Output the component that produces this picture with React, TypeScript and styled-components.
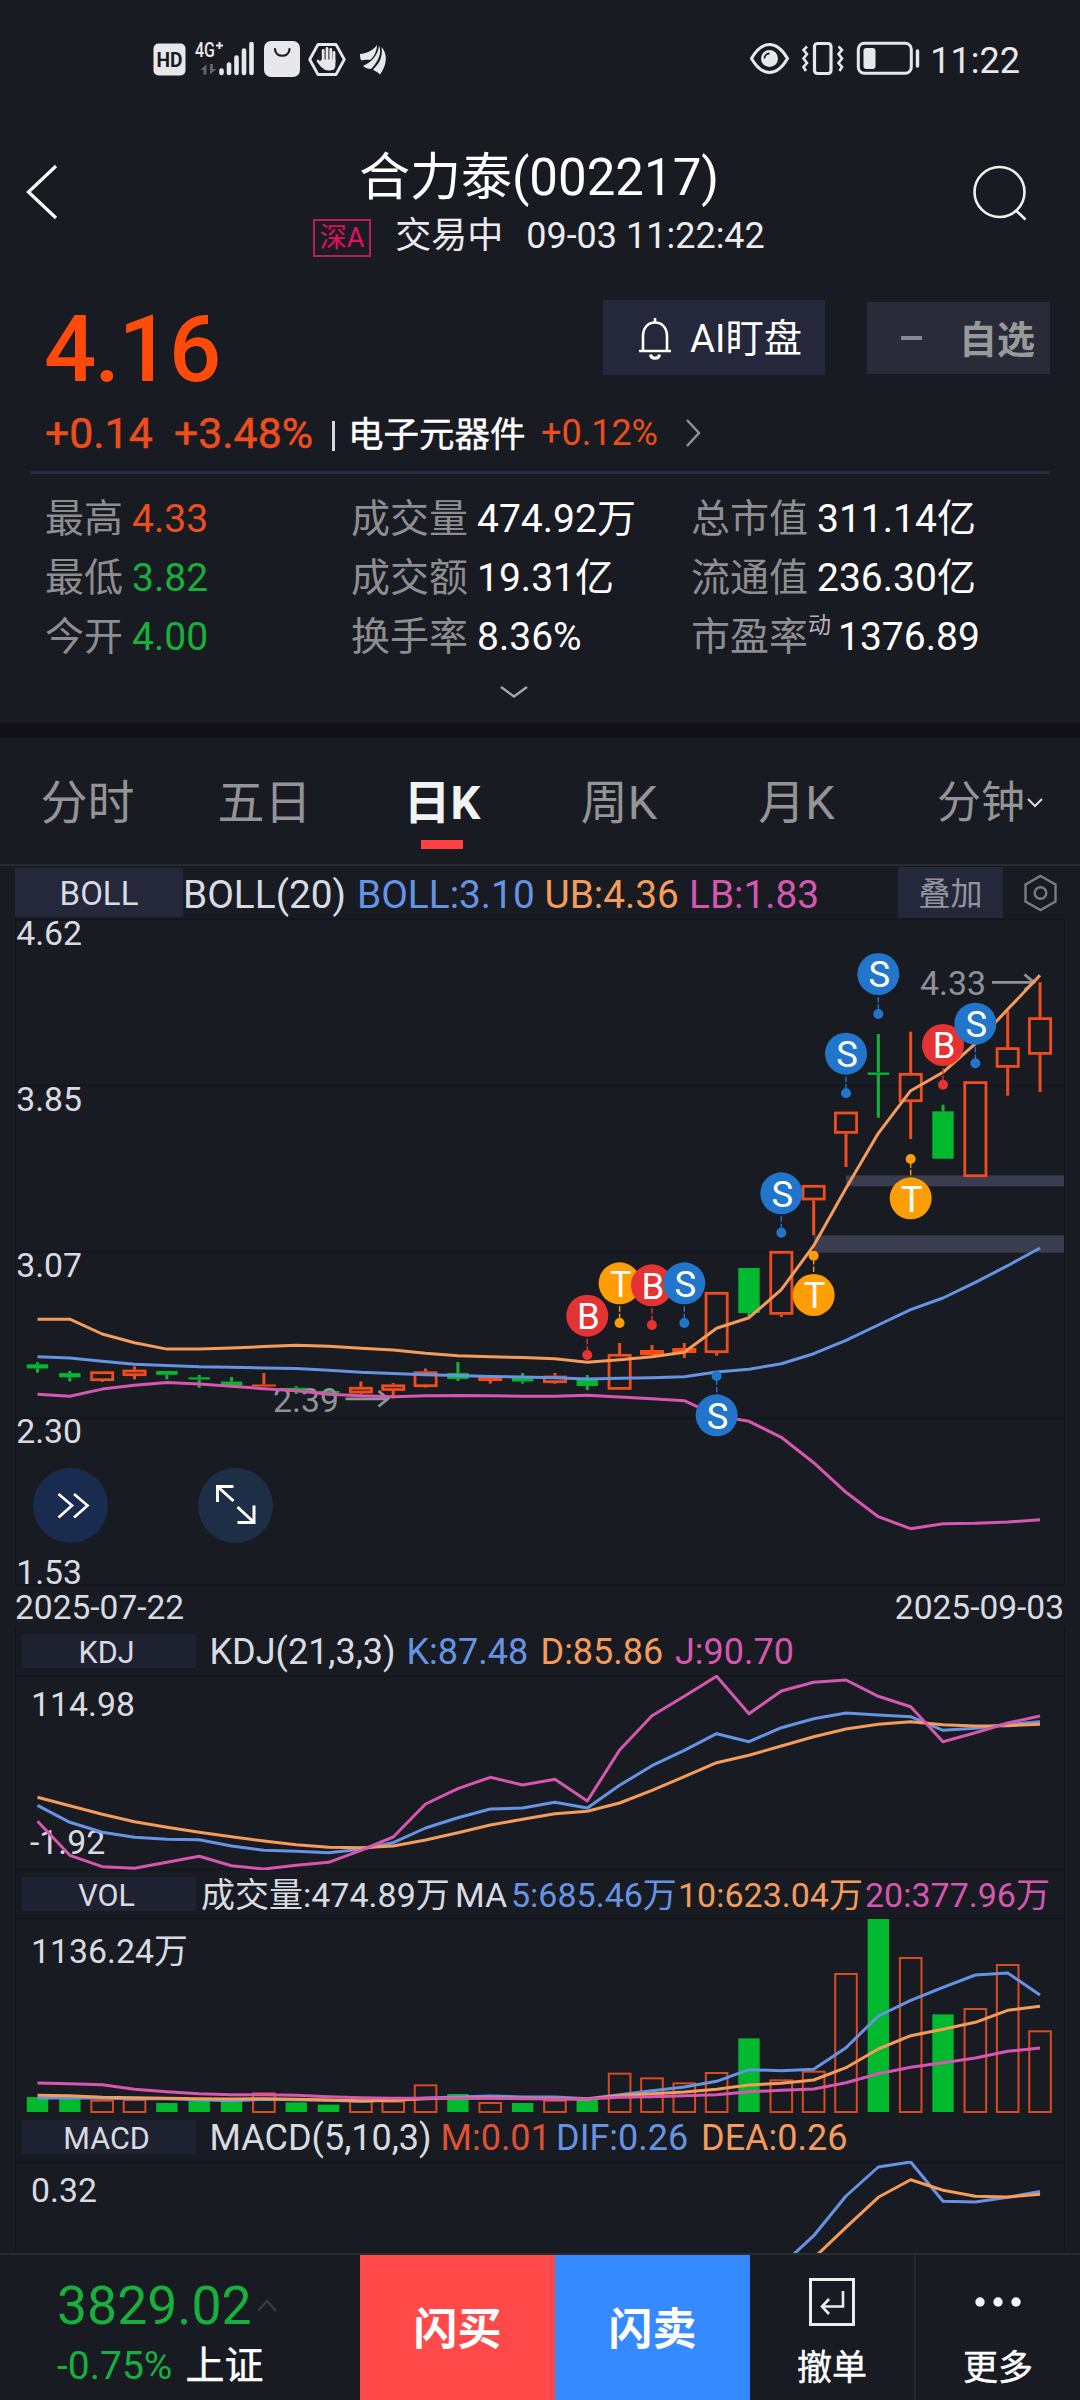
import React from 'react';
import styled, { createGlobalStyle } from 'styled-components';

const C = {
  bg: '#191b23',
  up: '#ff4a0a',
  upSoft: '#ee4d1c',
  down: '#17b03c',
  fill: '#00b92e',
  orange: '#f59c5a',
  blue: '#6694e4',
  pink: '#d557b0',
  text: '#d9dbe3',
  muted: '#8e8e91',
  line: '#13151c',
  chip: '#25283a',
};

const Global = createGlobalStyle`
  * { box-sizing: border-box; }
  body { margin: 0; background: ${C.bg}; }
  body, text { font-family: Roboto, "Noto Sans CJK SC", sans-serif; }
`;

const Screen = styled.div`
  width: 1080px;
  height: 2400px;
  background: ${C.bg};
  color: #fff;
  overflow: hidden;
  display: flex;
  flex-direction: column;
  white-space: pre;
`;

const Drawing = styled.svg<{ $open?: boolean }>`
  display: block;
  flex: none;
  overflow: ${p => (p.$open ? 'visible' : 'hidden')};
`;

/* ---------- status bar ---------- */

const StatusBar = styled.div`
  height: 116px;
  display: flex;
  align-items: center;
  justify-content: space-between;
  padding: 2px 60px 0 150px;
`;

const StatusGroup = styled.div`
  display: flex;
  align-items: center;
  height: 40px;
`;

const Clock = styled.span`
  color: #e8e8ea;
  font-size: 36px;
  line-height: 40px;
  margin: 4px 0 0 8px;
`;

/* ---------- header ---------- */

const Header = styled.header`
  height: 152px;
  display: flex;
  align-items: center;
  justify-content: space-between;
  padding: 0 50px 0 22px;
`;

const TitleStack = styled.div`
  align-self: flex-start;
  margin: 33px 0 0 42px;
  display: flex;
  flex-direction: column;
  align-items: center;
`;

const Title = styled.h1`
  margin: 0;
  font-size: 51px;
  font-weight: 400;
  line-height: 58px;
`;

const SubTitle = styled.div`
  display: flex;
  align-items: center;
  height: 58px;
  font-size: 36px;
  line-height: 58px;
  color: #ececee;
`;

const MarketBadge = styled.span`
  width: 58px;
  height: 38px;
  margin: 3px 24px 0 0;
  border: 2px solid #b52058;
  color: #e30f60;
  font-size: 27px;
  line-height: 35px;
  text-align: center;
`;

const SessionLabel = styled.span`
  margin-right: 23px;
`;

/* ---------- quote ---------- */

const Quote = styled.section`
  height: 455px;
  padding: 32px 30px 0;
`;

const PriceRow = styled.div`
  display: flex;
  align-items: flex-start;
  height: 99px;
  padding-left: 14px;
`;

const Price = styled.div`
  flex: 1;
  font-size: 92px;
  font-weight: 500;
  letter-spacing: -1.7px;
  line-height: 99px;
  color: ${C.up};
`;

const WatchButton = styled.div`
  width: 222px;
  height: 75px;
  display: flex;
  align-items: center;
  padding: 2px 0 0 34px;
  background: #25283b;
  font-size: 38.3px;
  line-height: 73px;
  gap: 17px;
`;

const FavButton = styled.div`
  width: 183px;
  height: 72px;
  margin: 2px 0 0 42px;
  padding: 0 15px 3px 34px;
  display: flex;
  align-items: center;
  justify-content: space-between;
  background: #292b38;
  color: #999;
  font-size: 38px;
  font-weight: 700;
`;

const Minus = styled.span`
  width: 21px;
  height: 4px;
  margin-top: 3px;
  background: #82879b;
`;

const ChangeRow = styled.div`
  display: flex;
  align-items: center;
  height: 68px;
  padding-left: 15px;
  line-height: 70px;
`;

const Change = styled.span<{ $size: number; $w?: number; $bold?: boolean }>`
  color: ${C.upSoft};
  font-size: ${p => p.$size}px;
  width: ${p => (p.$w ? p.$w + 'px' : 'auto')};
  -webkit-text-stroke: ${p => (p.$bold ? 0.5 : 0)}px ${C.upSoft};
`;

const Bar = styled.span`
  width: 3px;
  height: 30px;
  margin: 5px 13px 0 0;
  background: #d8d8da;
`;

const Sector = styled.span`
  width: 193px;
  margin-top: 3px;
  font-size: 35.5px;
  -webkit-text-stroke: 0.4px #fff;
`;

const Rule = styled.div`
  height: 3px;
  margin-top: 4px;
  background: #2a2c3a;
`;

const Stats = styled.div`
  display: grid;
  grid-template-columns: 306px 340px 1fr;
  grid-auto-rows: 59px;
  padding: 16px 0 0 15px;
`;

const Stat = styled.div`
  display: flex;
  font-size: 39px;
  line-height: 59px;
`;

const StatLabel = styled.span`
  color: ${C.muted};
`;

const StatNote = styled.span`
  width: 21px;
  color: #b4b4b8;
  font-size: 23px;
  line-height: 35px;
`;

const StatValue = styled.span<{ $color?: string }>`
  margin-left: 9px;
  color: ${p => p.$color || '#fff'};
`;

const Expand = styled.div`
  display: flex;
  justify-content: center;
  padding: 17px 52px 0 0;
`;

const Band = styled.div`
  height: 15px;
  background: #111016;
`;

/* ---------- tabs ---------- */

const Tabs = styled.nav`
  display: grid;
  grid-template-columns: 175px 179px 176px 178px 177px 1fr;
  height: 128px;
  border-bottom: 2px solid #2b2b2d;
`;

const Tab = styled.div<{ $active?: boolean; $shift?: number }>`
  display: flex;
  flex-direction: column;
  align-items: center;
  gap: 6px;
  padding: 34px 0 0 ${p => p.$shift || 0}px;
  font-size: 47px;
  line-height: 62px;
  font-weight: ${p => (p.$active ? 700 : 400)};
  color: ${p => (p.$active ? '#f2f2f3' : '#949496')};
`;

const TabLine = styled.span`
  display: flex;
  align-items: center;
  gap: 2px;
  font-size: 44px;
`;

const TabBar = styled.span`
  width: 42px;
  height: 9px;
  background: #ff4040;
`;

/* ---------- indicator panels ---------- */

const BollHead = styled.div`
  height: 53px;
  display: flex;
  align-items: center;
  padding: 0 22px 0 15px;
`;

const BollChip = styled.span`
  width: 168px;
  height: 49px;
  background: ${C.chip};
  color: ${C.text};
  font-size: 33px;
  line-height: 51px;
  text-align: center;
`;

const Info = styled.div<{ $cols: string; $size: number; $left: number }>`
  display: grid;
  grid-template-columns: ${p => p.$cols};
  margin-left: ${p => p.$left}px;
  padding-top: 3px;
  font-size: ${p => p.$size}px;
  line-height: 47px;
`;

const InfoItem = styled.span<{ $color?: string }>`
  color: ${p => p.$color || C.text};
`;

const Overlay = styled.span`
  width: 105px;
  height: 51px;
  margin-right: 20px;
  background: ${C.chip};
  color: #93959f;
  font-size: 32px;
  line-height: 54px;
  text-align: center;
`;

const Spring = styled.span`
  flex: 1;
`;

const Panel = styled.section`
  position: relative;
  width: 1050px;
  margin: 0 15px;
  border: solid ${C.line};
  border-width: 0 1px;
`;

const PanelHead = styled.div`
  height: 48px;
  display: flex;
  align-items: center;
  padding-left: 6px;
`;

const Chip = styled.span`
  width: 174px;
  height: 34px;
  padding-right: 5px;
  background: #1f2231;
  color: ${C.text};
  font-size: 30.5px;
  line-height: 37px;
  text-align: center;
`;

const RoundButton = styled.div<{ $left: number; $bg: string }>`
  position: absolute;
  left: ${p => p.$left}px;
  top: 549px;
  width: 75px;
  height: 75px;
  border-radius: 50%;
  background: ${p => p.$bg};
`;

const Dates = styled.div`
  height: 41px;
  display: flex;
  justify-content: space-between;
  padding: 0 16px 0 15px;
  font-size: 33.5px;
  line-height: 43px;
  color: ${C.text};
`;

/* ---------- bottom bar ---------- */

const Footer = styled.footer`
  height: 147px;
  display: flex;
  border-top: 2px solid #2b2c30;
`;

const IndexBox = styled.div`
  width: 360px;
  padding: 20px 0 0 57px;
`;

const IndexValue = styled.div`
  display: flex;
  align-items: center;
  gap: 5px;
  font-size: 53.5px;
  line-height: 61px;
  color: ${C.down};
`;

const IndexChange = styled.div`
  display: flex;
  gap: 13px;
  font-size: 39px;
  line-height: 60px;
  color: ${C.down};
`;

const IndexName = styled.span`
  color: #fff;
  -webkit-text-stroke: 0.4px #fff;
`;

const Trade = styled.div<{ $bg: string }>`
  width: 195px;
  background: ${p => p.$bg};
  font-size: 44px;
  font-weight: 700;
  line-height: 150px;
  text-align: center;
`;

const Action = styled.div<{ $divided?: boolean }>`
  flex: 1;
  display: flex;
  flex-direction: column;
  align-items: center;
  padding-top: 23px;
  border-left: ${p => (p.$divided ? '2px solid #26272d' : 'none')};
  font-size: 35px;
  line-height: 40px;
  -webkit-text-stroke: 0.4px #fff;
  gap: 23px;
`;

/* ---------- chart data (plot coordinates) ---------- */

const px = (i: number) => 37.5 + i * 32.34;

const UB = [1319.2, 1319.2, 1334, 1342.8, 1349.1, 1349.1, 1347.9, 1346.6, 1345.3, 1346.2, 1348.3, 1350, 1353.3, 1355.8, 1356.7, 1357.5, 1358.7, 1362.3, 1359.7, 1356.7, 1352.3, 1328.3, 1317.7, 1289.7, 1245.7, 1188.3, 1133.3, 1090.7, 1072.3, 1043.7, 1009.3, 975.3];
const MID = [1356.7, 1358, 1361.3, 1364.3, 1365.5, 1366.8, 1367.2, 1368, 1368.5, 1370.2, 1372.3, 1373.5, 1374.8, 1375.6, 1376.5, 1377, 1377.7, 1379, 1378.3, 1377.7, 1376.7, 1372, 1369.3, 1363.7, 1353.7, 1340.3, 1325, 1309.7, 1298, 1282.3, 1265.7, 1248];
const LB = [1394.2, 1396.3, 1389.1, 1385.3, 1382.4, 1384, 1386.2, 1388.7, 1390.8, 1394.2, 1395.8, 1396.7, 1395.8, 1395.4, 1395.8, 1396.3, 1396.3, 1395.3, 1397, 1398.7, 1400.7, 1415.7, 1421.3, 1437.3, 1462.7, 1492.3, 1516.7, 1528.7, 1523.7, 1523.3, 1522, 1519.7];

// [rising, body top, body bottom, wick top, wick bottom]
type Candle = [number, number, number, number, number];
const CANDLES: Candle[] = [
  [0, 1364.3, 1368.5, 1362.2, 1372.7], [0, 1373.1, 1377.3, 1371, 1381.5], [1, 1371.4, 1381, 1371.4, 1382],
  [1, 1369.7, 1376, 1366.4, 1379.4], [0, 1371, 1374.8, 1371, 1379.4], [0, 1377.3, 1379.5, 1374.8, 1387.8],
  [0, 1381.5, 1385.7, 1377, 1385.7], [1, 1384.5, 1386.5, 1373, 1386.5], [0, 1387.8, 1390, 1386, 1394],
  [0, 1391, 1393.3, 1391, 1395], [1, 1387, 1393.3, 1381.5, 1394.5], [1, 1384.5, 1390.8, 1383, 1398.3],
  [1, 1371.4, 1387, 1368.5, 1387.6], [0, 1373, 1379, 1362, 1381], [1, 1377, 1381, 1377, 1383.6],
  [0, 1377.3, 1381.5, 1373, 1383.6], [1, 1375.7, 1383, 1373, 1383.7], [0, 1379.7, 1386, 1375, 1390],
  [1, 1354, 1389.7, 1343, 1389.7], [1, 1350, 1355, 1345, 1355], [1, 1348, 1353, 1343, 1358],
  [1, 1292, 1353, 1292, 1355.7], [0, 1268, 1313, 1268, 1316], [1, 1251, 1314.7, 1251, 1317],
  [1, 1185, 1200.3, 1185, 1235.3], [1, 1111.7, 1133.7, 1111.7, 1167], [0, 1072.5, 1074.9, 1034, 1117.7],
  [1, 1073, 1102, 1031.7, 1139], [0, 1111.3, 1158.7, 1104.7, 1158.7], [1, 1081.3, 1177, 1081.3, 1177],
  [1, 1047.3, 1067.7, 1010.7, 1095.7], [1, 1017.3, 1054.7, 982.3, 1092],
];

// [index, letter, circle y, dot y]
const MARKS: [number, 'S' | 'B' | 'T', number, number][] = [
  [17, 'B', 1315.7, 1355], [18, 'T', 1283.3, 1323], [19, 'B', 1285.3, 1325], [20, 'S', 1283.3, 1323],
  [21, 'S', 1415.3, 1376], [23, 'S', 1193.3, 1232.7], [24, 'T', 1295, 1255.7], [25, 'S', 1053.7, 1093.3],
  [26, 'S', 974, 1014], [27, 'T', 1198.3, 1159], [28, 'B', 1045, 1084.7], [29, 'S', 1023.7, 1063.3],
];
const MARK_COLOR = { S: '#2176cc', B: '#e53232', T: '#ff9d05' };

const third = (base: number, v: number[]) => v.map(n => base + n / 3);

const KD_D = third(1580, [652, 677, 703, 725, 742, 757, 770, 783, 794, 802, 803, 798, 780, 758, 735, 718, 701, 694, 669, 631, 590, 548, 526, 498, 470, 447, 433, 425, 434, 438, 437, 433]);
const KD_K = third(1580, [676, 727, 757, 772, 778, 779, 798, 811, 814, 818, 808, 788, 744, 713, 687, 684, 667, 684, 616, 557, 511, 461, 485, 443, 416, 399, 405, 410, 451, 445, 433, 425]);
const KD_J = third(1580, [724, 826, 860, 865, 847, 829, 857, 867, 856, 847, 811, 771, 672, 626, 592, 615, 598, 663, 510, 407, 349, 289, 401, 333, 307, 300, 349, 380, 485, 458, 429, 408]);

const VOL_TOP = third(1870, [681, 682, 689, 687, 699, 693, 693, 667, 697, 704, 692, 692, 643, 672, 696, 699, 689, 690, 608, 622, 637, 606, 505, 628, 602, 309, 147, 261, 433, 414, 282, 481]);
const MA5 = third(1870, [684, 683, 685, 686, 686, 689, 692, 688, 689, 691, 694, 691, 684, 681, 678, 681, 681, 686, 674, 662, 651, 634, 599, 602, 598, 533, 438, 391, 352, 315, 309, 375]);
const MA10 = third(1870, [676, 677, 682, 683, 685, 686, 687, 686, 688, 690, 692, 691, 686, 684, 684, 685, 686, 687, 677, 671, 666, 658, 645, 640, 630, 593, 537, 497, 478, 457, 421, 409]);
const MA20 = third(1870, [639, 641, 644, 658, 665, 671, 674, 674, 676, 680, 683, 685, 685, 685, 685, 686, 687, 687, 682, 680, 677, 674, 665, 661, 657, 638, 611, 592, 578, 564, 544, 534]);

const DIF = [2265.7, 2235.7, 2196, 2167, 2162, 2201.3, 2202, 2197.3, 2191.5];
const DEA = [2290, 2258.2, 2227.3, 2197.3, 2179.7, 2190.3, 2196.3, 2197, 2194.3];

const Series = ({ ys, color, from = 0 }: { ys: number[]; color: string; from?: number }) => (
  <polyline
    points={ys.map((y, i) => `${px(i + from).toFixed(1)},${y.toFixed(1)}`).join(' ')}
    fill="none" stroke={color} strokeWidth={3} strokeLinejoin="round"
  />
);

const Label = ({ x, y, children, color = C.text }: { x: number; y: number; children: string; color?: string }) => (
  <text x={x} y={y} fontSize={33.8} fill={color}>{children}</text>
);

const CandleShape = ({ i }: { i: number }) => {
  const [rise, top, bot, hi, lo] = CANDLES[i];
  const x = px(i);
  const color = rise ? C.upSoft : C.down;
  const hollow = rise && bot - top > 5.5;
  return (
    <g stroke={color} strokeWidth={3} fill="none">
      {hi < top && <line x1={x} x2={x} y1={hi} y2={top} />}
      {lo > bot && <line x1={x} x2={x} y1={bot} y2={lo} />}
      {hollow
        ? <rect x={x - 10.6} y={top + 1.3} width={21.2} height={bot - top - 2.6} strokeWidth={2.8} />
        : <rect x={x - (rise ? 12 : 10.7)} y={top} width={rise ? 24 : 21.4} height={bot - top}
            fill={rise ? C.up : C.fill} stroke="none" />}
    </g>
  );
};

const Mark = ({ m }: { m: (typeof MARKS)[number] }) => {
  const [i, letter, cy, dot] = m;
  const x = px(i);
  const c = MARK_COLOR[letter];
  const dir = dot > cy ? 1 : -1;
  return (
    <g>
      <line x1={x} x2={x} y1={cy + dir * 23} y2={dot} stroke={c} strokeWidth={1.4} strokeDasharray="5.5 2" />
      <circle cx={x} cy={dot} r={5} fill={c} />
      <circle cx={x} cy={cy} r={21} fill={c} />
      <text x={x + 1} y={cy + 13.2} fontSize={36.5} fill="#fff" textAnchor="middle">{letter}</text>
    </g>
  );
};

const BollChart = () => (
  <Drawing $open width={1048} height={667} viewBox="16 919 1048 667">
    {[919.5, 1085.5, 1252, 1418.3, 1585].map(y => (
      <line key={y} x1={16} x2={1064} y1={y} y2={y} stroke={C.line} strokeWidth={1.4} />
    ))}
    <g fill="#393d4e">
      <rect x={846} y={1175.3} width={218} height={11} />
      <rect x={814} y={1235.3} width={250} height={17.4} />
    </g>
    <Label x={16.2} y={945}>4.62</Label>
    <Label x={16.2} y={1110.5}>3.85</Label>
    <Label x={16.2} y={1276.7}>3.07</Label>
    <Label x={16.2} y={1442.5}>2.30</Label>
    <Label x={16.2} y={1583.5}>1.53</Label>
    {CANDLES.map((_, i) => <CandleShape key={i} i={i} />)}
    <Label x={920} y={995} color="#8f9297">4.33</Label>
    <Label x={273} y={1412.3} color="#8f9297">2.39</Label>
    <g stroke="#8f9297" strokeWidth={2.8} fill="none">
      <path d="M992 982.3H1034M1024.500 974.500L1034 982.300L1024.500 990" />
      <path d="M345.500 1398.800H388M378.500 1391L388 1398.800L378.500 1406.500" />
    </g>
    <Series ys={MID} color={C.blue} />
    <Series ys={UB} color={C.orange} />
    <Series ys={LB} color={C.pink} />
    {MARKS.map(m => <Mark key={m[0]} m={m} />)}
  </Drawing>
);

const KdjChart = () => (
  <Drawing width={1048} height={195} viewBox="16 1675 1048 195">
    <path d="M16 1675.500H1064M16 1869.500H1064" stroke={C.line} strokeWidth={1.4} />
    <Label x={31} y={1716}>114.98</Label>
    <Label x={30} y={1854}>-1.92</Label>
    <Series ys={KD_K} color={C.blue} />
    <Series ys={KD_D} color={C.orange} />
    <Series ys={KD_J} color={C.pink} />
  </Drawing>
);

const VolChart = () => (
  <Drawing width={1048} height={195} viewBox="16 1918 1048 195">
    <path d="M16 1918.500H1064" stroke={C.line} strokeWidth={1.4} />
    <Label x={31} y={1963}>1136.24万</Label>
    {VOL_TOP.map((y, i) => CANDLES[i][0]
      ? <rect key={i} x={px(i) - 10.8} y={y + 1} width={21.6} height={2112 - y - 1} fill="none" stroke="#d84a20" strokeWidth={2} />
      : <rect key={i} x={px(i) - 10.7} y={y} width={21.4} height={2112 - y} fill={C.fill} />)}
    <Series ys={MA5} color={C.blue} />
    <Series ys={MA10} color={C.orange} />
    <Series ys={MA20} color={C.pink} />
  </Drawing>
);

const MacdChart = () => (
  <Drawing width={1048} height={92} viewBox="16 2161 1048 92">
    <path d="M16 2161.500H1064" stroke={C.line} strokeWidth={1.4} />
    <Label x={31} y={2202}>0.32</Label>
    <Series ys={DIF} color={C.blue} from={23} />
    <Series ys={DEA} color={C.orange} from={23} />
  </Drawing>
);

/* ---------- icons ---------- */

const SignalIcons = () => (
  <Drawing width={240} height={40} viewBox="150 39 240 40">
    <rect x={153.500} y={43.500} width={32} height={32} rx={5} fill="#e8e8ea" />
    <text x={169.500} y={66.500} fontSize={20} fontWeight={700} textAnchor="middle" textLength={26} lengthAdjust="spacingAndGlyphs" fill={C.bg}>HD</text>
    <text x={195} y={56.500} fontSize={20} fontWeight={500} textLength={20} lengthAdjust="spacingAndGlyphs" fill="#e8e8ea">4G</text>
    <path d="M219.500 42v7M216 45.500h7" stroke="#e8e8ea" strokeWidth={2} />
    <path d="M206.500 64V74.500H203.500V70H200.500ZM210 64H213V69H216.500L210 74.500Z" fill="#62636a" />
    <g stroke="#e8e8ea" strokeWidth={4.600} strokeLinecap="round">
      <path d="M221.500 70.500V73M229 64.500V73M236.500 57.500V73M244 50.500V73M251.500 44V73" />
    </g>
    <rect x={264} y={41} width={36} height={36} rx={7} fill="#e8e8ea" />
    <path d="M275 49c0 9 14.500 9 14.500 0" fill="none" stroke={C.bg} strokeWidth={2.200} strokeLinecap="round" />
    <path d="M318 44.500H336L344.300 59.500L336 74.500H318L309.700 59.500Z" fill="none" stroke="#e8e8ea" strokeWidth={2.800} strokeLinejoin="round" />
    <path d="M323.200 50.500V62M327 48.500V62M330.800 49.500V62M334 52.500V62M318 61L322 66" stroke="#e8e8ea" strokeWidth={2.800} strokeLinecap="round" />
    <path d="M321.800 59.500H335.400V65C335.400 70 332.500 70.500 328.500 70.500C324 70.500 321.500 67 318.500 62.500Z" fill="#e8e8ea" />
    <path d="M360 54C366 53.500 373 51 377 45C377 51 374 57 370 60C366 59 362 61 361 60C360 58 360 56 360 54Z" fill="#e8e8ea" />
    <path d="M363 66C372 62 378 55 379 45.500C382 52 379 61 371 69C368 69 365 68 363 66Z" fill="#e8e8ea" />
    <path d="M373 69.500C380 63 383 56 381.500 47C388 54 387 65 380 74.500C378 72.500 375 71 373 69.500Z" fill="#e8e8ea" />
  </Drawing>
);

const PowerIcons = () => (
  <Drawing width={174} height={40} viewBox="748 39 174 40">
    <g fill="none" stroke="#e8e8ea">
      <path d="M751.500 58.500C757 49 763 44.500 769.500 44.500S782 49 787.500 58.500C782 68 776 72.500 769.500 72.500S757 68 751.500 58.500Z" strokeWidth={3} />
      <rect x={814.500} y={43.500} width={16.500} height={30} rx={3} strokeWidth={3.200} />
      <path d="M807 46.500L803.500 50L807 54L803.500 58.500L807 63L803.500 67L806 71M838.500 46.500L842 50L838.500 54L842 58.500L838.500 63L842 67L839.500 71" strokeWidth={2.600} />
      <rect x={858.300} y={43.300} width={53} height={30} rx={6} strokeWidth={3} />
      <path d="M917.500 51V66" strokeWidth={3.400} strokeLinecap="round" />
    </g>
    <circle cx={769.500} cy={58.500} r={8.500} fill="#e8e8ea" />
    <path d="M764.500 58.500A5 5 0 0 1 769.500 53.500" fill="none" stroke={C.bg} strokeWidth={1.800} />
    <rect x={863.500} y={48} width={12} height={21} rx={3} fill="#e8e8ea" />
  </Drawing>
);

const BackIcon = () => (
  <Drawing width={44} height={60} viewBox="0 0 44 60">
    <path d="M34 4L6.500 30L34 56" fill="none" stroke="#fff" strokeWidth={3.200} />
  </Drawing>
);

const SearchIcon = () => (
  <Drawing width={60} height={60} viewBox="970 162 60 60">
    <circle cx={999.500} cy={192} r={25} fill="none" stroke="#f0f0f1" strokeWidth={2.600} />
    <path d="M1015.500 210L1025.500 219.500" stroke="#f0f0f1" strokeWidth={2.600} />
  </Drawing>
);

const BellIcon = () => (
  <Drawing width={36} height={44} viewBox="0 0 36 44">
    <g fill="none" stroke="#fff" strokeWidth={2.600}>
      <path d="M18 1V5M2 34H34M6 33.500V19C6 11 11 5.500 18 5.500S30 11 30 19V33.500" />
      <path d="M13.500 37.500C14 42.500 22 42.500 22.500 37.500" strokeWidth={3} />
    </g>
  </Drawing>
);

const Chevron = ({ d, w, h, color, s = 2.4 }: { d: string; w: number; h: number; color: string; s?: number }) => (
  <Drawing width={w} height={h} viewBox={`0 0 ${w} ${h}`}>
    <path d={d} fill="none" stroke={color} strokeWidth={s} />
  </Drawing>
);

const HexIcon = () => (
  <Drawing width={35} height={38} viewBox="0 0 35 38">
    <g fill="none" stroke="#797b82" strokeWidth={2.400}>
      <path d="M17.500 2L32.500 10.500V27.500L17.500 36L2.500 27.500V10.500Z" />
      <circle cx={17.500} cy={19} r={5.800} />
    </g>
  </Drawing>
);

const ForwardIcon = () => (
  <Drawing width={75} height={75} viewBox="0 0 75 75">
    <path d="M25.500 26L39 37.500L25.500 49.500M41 26L54.500 37.500L41 49.500" fill="none" stroke="#fff" strokeWidth={2.700} />
  </Drawing>
);

const ExpandIcon = () => (
  <Drawing width={75} height={75} viewBox="0 0 75 75">
    <path d="M35.500 18.500H19.500V34M20 19L35.500 33M39.500 39L55.500 54M56 37.500V54.500H39.500" fill="none" stroke="#fff" strokeWidth={3} />
  </Drawing>
);

const CancelIcon = () => (
  <Drawing width={46} height={48} viewBox="0 0 46 48">
    <rect x={1.500} y={1.500} width={43} height={45} fill="none" stroke="#ededee" strokeWidth={3} />
    <path d="M34 13V28.500H13M20 21L13 28.500L20 36" fill="none" stroke="#ededee" strokeWidth={2.600} />
  </Drawing>
);

const MoreIcon = () => (
  <Drawing width={46} height={48} viewBox="0 0 46 48">
    <g fill="#f3f3f4">
      <circle cx={5} cy={24} r={4.700} /><circle cx={23} cy={24} r={4.700} /><circle cx={41} cy={24} r={4.700} />
    </g>
  </Drawing>
);

/* ---------- page ---------- */

const STATS: { label: string; value: string; color?: string; note?: string }[] = [
  { label: '最高', value: '4.33', color: C.upSoft },
  { label: '成交量', value: '474.92万' },
  { label: '总市值', value: '311.14亿' },
  { label: '最低', value: '3.82', color: C.down },
  { label: '成交额', value: '19.31亿' },
  { label: '流通值', value: '236.30亿' },
  { label: '今开', value: '4.00', color: C.down },
  { label: '换手率', value: '8.36%' },
  { label: '市盈率', value: '1376.89', note: '动' },
];

export default function App() {
  return (
    <Screen>
      <Global />
      <StatusBar>
        <StatusGroup><SignalIcons /></StatusGroup>
        <StatusGroup><PowerIcons /><Clock>11:22</Clock></StatusGroup>
      </StatusBar>

      <Header>
        <BackIcon />
        <TitleStack>
          <Title>合力泰(002217)</Title>
          <SubTitle>
            <MarketBadge>深A</MarketBadge>
            <SessionLabel>交易中</SessionLabel>
            <span>09-03 11:22:42</span>
          </SubTitle>
        </TitleStack>
        <SearchIcon />
      </Header>

      <Quote>
        <PriceRow>
          <Price>4.16</Price>
          <WatchButton><BellIcon />AI盯盘</WatchButton>
          <FavButton><Minus />自选</FavButton>
        </PriceRow>
        <ChangeRow>
          <Change $size={42.8} $w={287} $bold>+0.14  +3.48%</Change>
          <Bar />
          <Sector>电子元器件</Sector>
          <Change $size={36} $w={144}>+0.12%</Change>
          <Chevron d="M2 2L14 15L2 28" w={17} h={30} color="#949497" />
        </ChangeRow>
        <Rule />
        <Stats>
          {STATS.map(s => (
            <Stat key={s.label}>
              <StatLabel>{s.label}</StatLabel>
              {s.note && <StatNote>{s.note}</StatNote>}
              <StatValue $color={s.color}>{s.value}</StatValue>
            </Stat>
          ))}
        </Stats>
        <Expand><Chevron d="M2 3L15 12.500L28 3" w={30} h={16} color="#a6a6a9" /></Expand>
      </Quote>

      <Band />

      <Tabs>
        <Tab>分时</Tab>
        <Tab>五日</Tab>
        <Tab $active>日K<TabBar /></Tab>
        <Tab>周K</Tab>
        <Tab>月K</Tab>
        <Tab $shift={15}>
          <TabLine>分钟<Chevron d="M1 2L8 9L15 2" w={16} h={12} color="#dcdcde" s={2} /></TabLine>
        </Tab>
      </Tabs>

      <BollHead>
        <BollChip>BOLL</BollChip>
        <Info $cols="174px 187.5px 144.5px 140px" $size={38.8} $left={0}>
          <InfoItem>BOLL(20)</InfoItem>
          <InfoItem $color={C.blue}>BOLL:3.10</InfoItem>
          <InfoItem $color={C.orange}>UB:4.36</InfoItem>
          <InfoItem $color={C.pink}>LB:1.83</InfoItem>
        </Info>
        <Spring />
        <Overlay>叠加</Overlay>
        <HexIcon />
      </BollHead>

      <Panel>
        <BollChart />
        <RoundButton $left={17} $bg="#1a2b50"><ForwardIcon /></RoundButton>
        <RoundButton $left={182} $bg="#1d2e47"><ExpandIcon /></RoundButton>
      </Panel>
      <Dates><span>2025-07-22</span><span>2025-09-03</span></Dates>

      <Panel>
        <PanelHead>
          <Chip>KDJ</Chip>
          <Info $cols="197px 134px 134.5px 130px" $size={36} $left={13.5}>
            <InfoItem>KDJ(21,3,3)</InfoItem>
            <InfoItem $color={C.blue}>K:87.48</InfoItem>
            <InfoItem $color={C.orange}>D:85.86</InfoItem>
            <InfoItem $color={C.pink}>J:90.70</InfoItem>
          </Info>
        </PanelHead>
        <KdjChart />
      </Panel>

      <Panel>
        <PanelHead>
          <Chip>VOL</Chip>
          <Info $cols="254px 56px 167px 187px 190px" $size={34} $left={5}>
            <InfoItem>成交量:474.89万</InfoItem>
            <InfoItem>MA</InfoItem>
            <InfoItem $color={C.blue}>5:685.46万</InfoItem>
            <InfoItem $color={C.orange}>10:623.04万</InfoItem>
            <InfoItem $color={C.pink}>20:377.96万</InfoItem>
          </Info>
        </PanelHead>
        <VolChart />
      </Panel>

      <Panel>
        <PanelHead>
          <Chip>MACD</Chip>
          <Info $cols="231px 115.5px 145px 150px" $size={36} $left={13.5}>
            <InfoItem>MACD(5,10,3)</InfoItem>
            <InfoItem $color="#de5233">M:0.01</InfoItem>
            <InfoItem $color={C.blue}>DIF:0.26</InfoItem>
            <InfoItem $color={C.orange}>DEA:0.26</InfoItem>
          </Info>
        </PanelHead>
        <MacdChart />
      </Panel>

      <Footer>
        <IndexBox>
          <IndexValue>
            3829.02
            <Chevron d="M1 12L10 2L19 12" w={20} h={14} color="#3b3c40" s={2} />
          </IndexValue>
          <IndexChange>-0.75%<IndexName>上证</IndexName></IndexChange>
        </IndexBox>
        <Trade $bg="#ff4a49">闪买</Trade>
        <Trade $bg="#358aff">闪卖</Trade>
        <Action><CancelIcon />撤单</Action>
        <Action $divided><MoreIcon />更多</Action>
      </Footer>
    </Screen>
  );
}
